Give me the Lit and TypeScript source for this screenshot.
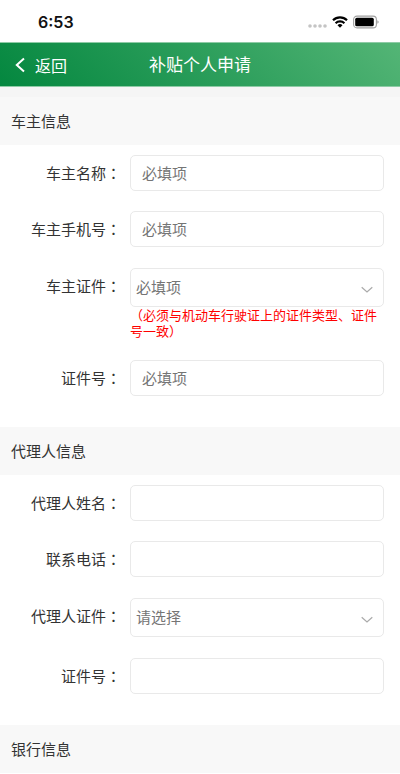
import { LitElement, html, css, nothing } from "lit";
import { customElement } from "lit/decorators.js";

interface Field {
  id: string;
  label: string;
  kind: "text" | "select";
  placeholder?: string;
  options?: string[];
  hint?: string;
}

interface Section {
  title: string;
  fields: Field[];
}

const ID_TYPES = ["居民身份证", "护照"];

const SECTIONS: Section[] = [
  {
    title: "车主信息",
    fields: [
      { id: "owner-name", label: "车主名称", kind: "text", placeholder: "必填项" },
      { id: "owner-phone", label: "车主手机号", kind: "text", placeholder: "必填项" },
      {
        id: "owner-id-type",
        label: "车主证件",
        kind: "select",
        placeholder: "必填项",
        options: ID_TYPES,
        hint: "（必须与机动车行驶证上的证件类型、证件号一致）",
      },
      { id: "owner-id", label: "证件号", kind: "text", placeholder: "必填项" },
    ],
  },
  {
    title: "代理人信息",
    fields: [
      { id: "agent-name", label: "代理人姓名", kind: "text" },
      { id: "agent-phone", label: "联系电话", kind: "text" },
      {
        id: "agent-id-type",
        label: "代理人证件",
        kind: "select",
        placeholder: "请选择",
        options: ID_TYPES,
      },
      { id: "agent-id", label: "证件号", kind: "text" },
    ],
  },
  { title: "银行信息", fields: [] },
];

@customElement("app-root")
export class AppRoot extends LitElement {
  static styles = css`
    :host {
      display: block;
      background: #fff;
      color: #333;
      font-family: "Noto Sans CJK SC", sans-serif;
      font-size: 15px;
    }
    * {
      box-sizing: border-box;
    }
    .status {
      display: flex;
      align-items: center;
      justify-content: space-between;
      height: 42px;
      padding: 2px 21px 0 38px;
      color: #111;
      font: 600 16px/20px Inter, sans-serif;
    }
    .icons {
      display: flex;
      align-items: center;
      gap: 5px;
    }
    .icons svg {
      display: block;
    }
    .bar {
      display: grid;
      grid-template-columns: 1fr auto 1fr;
      align-items: center;
      height: 45px;
      padding-bottom: 2px;
      border-top: 1px solid #8ecba6;
      border-bottom: 1px solid #8ecba6;
      background: linear-gradient(45deg, #04873f, #2a9d5a 50%, #54b576) border-box;
      color: #fff;
    }
    .back {
      display: flex;
      align-items: center;
      gap: 10px;
      justify-self: start;
      padding: 2px 0 0 15px;
      border: 0;
      background: none;
      color: inherit;
      font: inherit;
      font-size: 16px;
      line-height: 24px;
    }
    .title {
      margin: 0;
      font-size: 17px;
      font-weight: 400;
      line-height: 24px;
    }
    .form {
      border-top: 10px solid #f5f5f5;
    }
    .heading {
      margin: 0;
      padding: 0 11px;
      background: #f8f8f8;
      font-size: 15px;
      font-weight: 400;
      line-height: 48px;
    }
    .fields {
      padding-bottom: 21px;
    }
    .row {
      display: grid;
      grid-template-columns: 121px 1fr;
      column-gap: 9px;
      padding: 10px 16px 10px 0;
    }
    .row.select {
      padding-top: 11px;
      padding-bottom: 11px;
    }
    .label {
      text-align: right;
      line-height: 36px;
    }
    .colon {
      font-family: "Noto Sans CJK TC", sans-serif;
    }
    .control {
      display: block;
      width: 100%;
      height: 36px;
      margin: 0;
      padding: 0 11px 2px;
      border: 1px solid #e9e9e9;
      border-radius: 5px;
      outline: 0;
      background: #fff;
      color: #757575;
      font: inherit;
    }
    .control::placeholder {
      color: #757575;
    }
    select.control {
      height: 39px;
      padding: 0 32px 2px 5px;
      appearance: none;
    }
    .picker {
      position: relative;
    }
    .arrow {
      position: absolute;
      top: 18px;
      right: 11px;
      pointer-events: none;
    }
    .hint {
      margin: 0;
      color: #f00;
      font-size: 13px;
      line-height: 16px;
    }
  `;

  private renderControl(f: Field) {
    if (f.kind === "text") {
      return html`<input class="control" id=${f.id} type="text" placeholder=${f.placeholder ?? nothing} />`;
    }
    return html`
      <div class="picker">
        <select class="control" id=${f.id}>
          <option value="">${f.placeholder}</option>
          ${f.options?.map((o) => html`<option>${o}</option>`)}
        </select>
        <svg class="arrow" width="12" height="8" viewBox="0 0 12 8" fill="none" stroke="#aaa" stroke-width="1.2" aria-hidden="true">
          <path d="M.7 1.2 6 6l5.3-4.8" />
        </svg>
      </div>
    `;
  }

  private renderField(f: Field) {
    return html`
      <div class="row ${f.kind}">
        <label class="label" for=${f.id}>${f.label}<span class="colon" lang="zh-TW">：</span></label>
        <div>
          ${this.renderControl(f)}
          ${f.hint ? html`<p class="hint">${f.hint}</p>` : nothing}
        </div>
      </div>
    `;
  }

  render() {
    return html`
      <div class="status">
        <span>6:53</span>
        <div class="icons" aria-hidden="true">
          <svg width="19" height="14" viewBox="0 0 19 14" fill="#c4c4c4">
            <circle cx="2" cy="11" r="1.8" />
            <circle cx="7" cy="11" r="1.8" />
            <circle cx="12" cy="11" r="1.8" />
            <circle cx="17" cy="11" r="1.8" />
          </svg>
          <svg width="16" height="14" viewBox="0 0 16 14" fill="none" stroke="#000" stroke-width="2.2">
            <path d="M1 5.2a10 10 0 0 1 14 0" />
            <path d="M3.6 8.2a6.3 6.3 0 0 1 8.8 0" />
            <path d="M8 12.8 5.5 10.3a3.5 3.5 0 0 1 5 0Z" fill="#000" stroke="none" />
          </svg>
          <svg width="26" height="14" viewBox="0 0 26 14">
            <rect x=".6" y="1.1" width="22.8" height="11.8" rx="3.4" fill="none" stroke="#a0a0a0" stroke-width="1.1" />
            <rect x="2.2" y="2.7" width="18.6" height="8.6" rx="1.6" fill="#000" />
            <path d="M24.4 5.2c1.6.6 1.6 3 0 3.6Z" fill="#999" />
          </svg>
        </div>
      </div>
      <header class="bar">
        <button class="back" type="button">
          <svg width="10" height="16" viewBox="0 0 10 16" fill="none" stroke="#fff" stroke-width="2" aria-hidden="true">
            <path d="M9 1.5 1.8 8 9 14.5" />
          </svg>
          返回
        </button>
        <h1 class="title">补贴个人申请</h1>
      </header>
      <form class="form">
        ${SECTIONS.map(
          (s) => html`
            <section>
              <h2 class="heading">${s.title}</h2>
              ${s.fields.length
                ? html`<div class="fields">${s.fields.map((f) => this.renderField(f))}</div>`
                : nothing}
            </section>
          `
        )}
      </form>
    `;
  }
}
